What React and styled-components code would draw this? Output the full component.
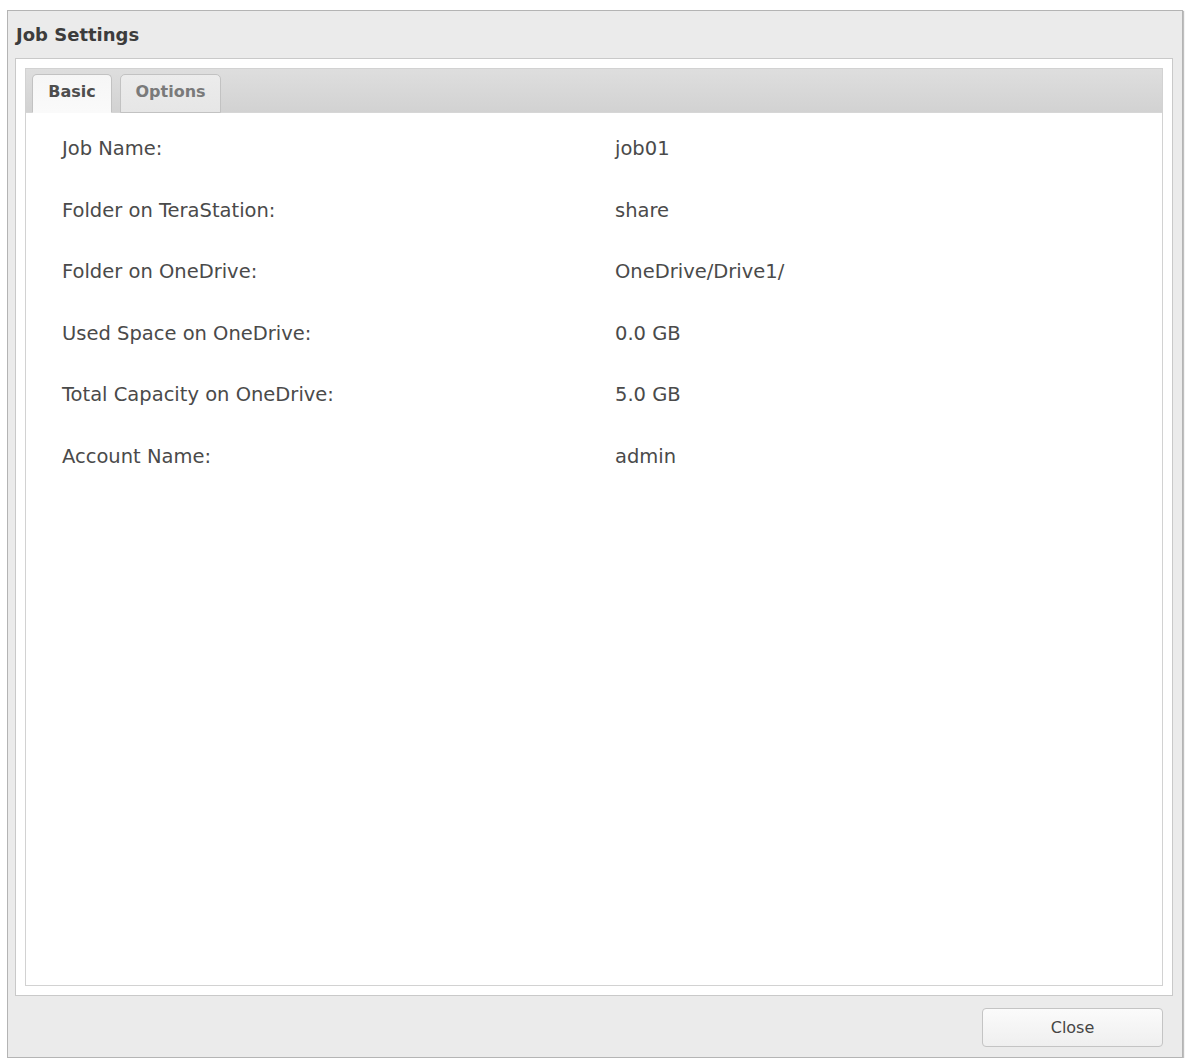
import React, { useState } from 'react';
import styled, { createGlobalStyle } from 'styled-components';

const GlobalStyle = createGlobalStyle`
  html, body {
    margin: 0;
    padding: 0;
    background: #ffffff;
  }
  body {
    font-family: Tahoma, "DejaVu Sans", Verdana, sans-serif;
  }
`;

const Window = styled.div`
  box-sizing: border-box;
  margin: 10px 0 0 7px;
  width: 1176px;
  height: 1048px;
  display: flex;
  flex-direction: column;
  background: #ebebeb;
  border: 1px solid #b4b4b4;
  box-shadow: 1px 1px 1px rgba(0, 0, 0, 0.25);
`;

const TitleBar = styled.div`
  height: 47px;
  display: flex;
  align-items: center;
  padding-left: 8px;
  font-size: 18px;
  font-weight: bold;
  color: #3c3c3c;
`;

const Panel = styled.div`
  box-sizing: border-box;
  margin-left: 7px;
  width: 1158px;
  flex: 1;
  display: flex;
  padding: 9px;
  background: #ffffff;
  border: 1px solid #c9c9c9;
`;

const TabFrame = styled.div`
  flex: 1;
  display: flex;
  flex-direction: column;
  border: 1px solid #d2d2d2;
`;

const TabStrip = styled.div`
  height: 43px;
  display: flex;
  align-items: flex-end;
  gap: 8px;
  padding-left: 6px;
  background: linear-gradient(#dedede, #d2d2d2);
  border-bottom: 1px solid #d6d6d6;
`;

const Tab = styled.button`
  box-sizing: border-box;
  height: 39px;
  width: ${p => p.$width}px;
  margin-bottom: -1px;
  padding: 0 0 4px;
  border: 1px solid #c2c2c2;
  border-bottom: ${p => (p.$active ? '1px solid #fafafa' : '1px solid #c2c2c2')};
  border-radius: 5px 5px 0 0;
  background: ${p => (p.$active ? 'linear-gradient(#f6f6f6, #fafafa)' : 'linear-gradient(#ececec, #e6e6e6)')};
  font-family: inherit;
  font-size: 16px;
  font-weight: bold;
  color: ${p => (p.$active ? '#4e4e4e' : '#7a7a7a')};
  cursor: pointer;
`;

const Content = styled.div`
  flex: 1;
  padding: 20px 0 0 36px;
  display: flex;
  flex-direction: column;
  gap: 0;
`;

const Row = styled.div`
  display: grid;
  grid-template-columns: 553px 1fr;
  height: 61.6px;
  font-size: 19.5px;
  color: #4a4a4a;
`;

const Label = styled.span`
  line-height: 31px;
`;

const Value = styled.span`
  line-height: 31px;
`;

const Footer = styled.div`
  height: 61px;
  display: flex;
  align-items: center;
  justify-content: flex-end;
  padding-right: 19px;
`;

const CloseButton = styled.button`
  box-sizing: border-box;
  width: 181px;
  height: 39px;
  margin-top: 1px;
  border: 1px solid #c4c4c4;
  border-radius: 4px;
  background: linear-gradient(#fbfbfb, #efefef);
  font-family: inherit;
  font-size: 16px;
  color: #454545;
  cursor: pointer;
`;

const rows = [
  ['Job Name:', 'job01'],
  ['Folder on TeraStation:', 'share'],
  ['Folder on OneDrive:', 'OneDrive/Drive1/'],
  ['Used Space on OneDrive:', '0.0 GB'],
  ['Total Capacity on OneDrive:', '5.0 GB'],
  ['Account Name:', 'admin'],
];

const App = () => {
  const [tab, setTab] = useState('basic');

  return (
    <>
      <GlobalStyle />
      <Window>
        <TitleBar>Job Settings</TitleBar>
        <Panel>
          <TabFrame>
            <TabStrip>
              <Tab $width={80} $active={tab === 'basic'} onClick={() => setTab('basic')}>
                Basic
              </Tab>
              <Tab $width={101} $active={tab === 'options'} onClick={() => setTab('options')}>
                Options
              </Tab>
            </TabStrip>
            <Content>
              {tab === 'basic' &&
                rows.map(([label, value]) => (
                  <Row key={label}>
                    <Label>{label}</Label>
                    <Value>{value}</Value>
                  </Row>
                ))}
            </Content>
          </TabFrame>
        </Panel>
        <Footer>
          <CloseButton>Close</CloseButton>
        </Footer>
      </Window>
    </>
  );
};

export default App;
